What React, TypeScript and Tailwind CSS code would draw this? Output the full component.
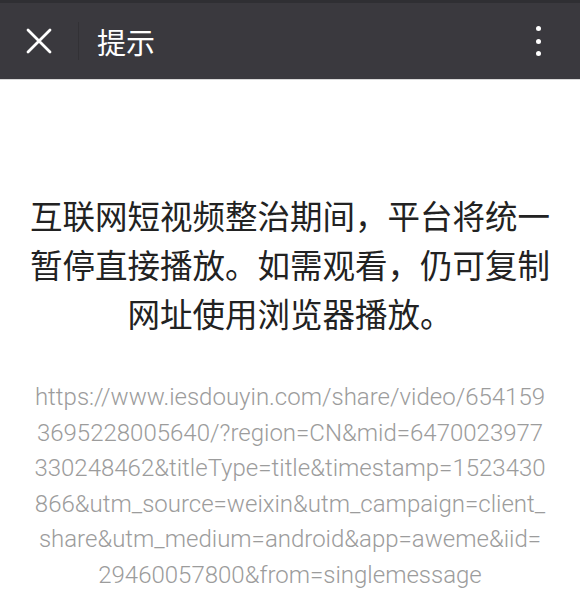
export default function App() {
  const urlLines = [
    'https://www.iesdouyin.com/share/video/654159',
    '3695228005640/?region=CN&mid=6470023977',
    '330248462&titleType=title&timestamp=1523430',
    '866&utm_source=weixin&utm_campaign=client_',
    'share&utm_medium=android&app=aweme&iid=',
    '29460057800&from=singlemessage',
  ];

  return (
    <div className="w-[580px] h-[604px] overflow-hidden bg-white font-['Noto_Sans_CJK_SC',sans-serif]">
      <div className="h-[80px] bg-[#3a393e] flex items-center border-t-[3px] border-t-[#2f2f33] border-b border-b-[#d8d8d8]">
        <div className="w-[78px] flex justify-center">
          <svg width="26" height="26" viewBox="0 0 26 26" className="text-white">
            <path d="M2 2 L24 24 M24 2 L2 24" stroke="currentColor" strokeWidth="2.8" strokeLinecap="round" />
          </svg>
        </div>
        <div className="w-px h-[38px] bg-[#323135]" />
        <div className="ml-[18px] text-white text-[29px] leading-none">提示</div>
        <div className="ml-auto mr-[39px] flex flex-col gap-[7.5px]">
          <div className="w-[5px] h-[5px] rounded-full bg-white" />
          <div className="w-[5px] h-[5px] rounded-full bg-white" />
          <div className="w-[5px] h-[5px] rounded-full bg-white" />
        </div>
      </div>

      <div className="pt-[110px] text-center text-[#222] text-[32.5px] leading-[49px]">
        <div>互联网短视频整治期间，平台将统一</div>
        <div>暂停直接播放。如需观看，仍可复制</div>
        <div>网址使用浏览器播放。</div>
      </div>

      <div className="mt-[43px] text-center text-[#9c9c9c] text-[24px] leading-[35.6px] font-light font-['Roboto',sans-serif]">
        {urlLines.map((l) => (
          <div key={l}>{l}</div>
        ))}
      </div>
    </div>
  );
}
